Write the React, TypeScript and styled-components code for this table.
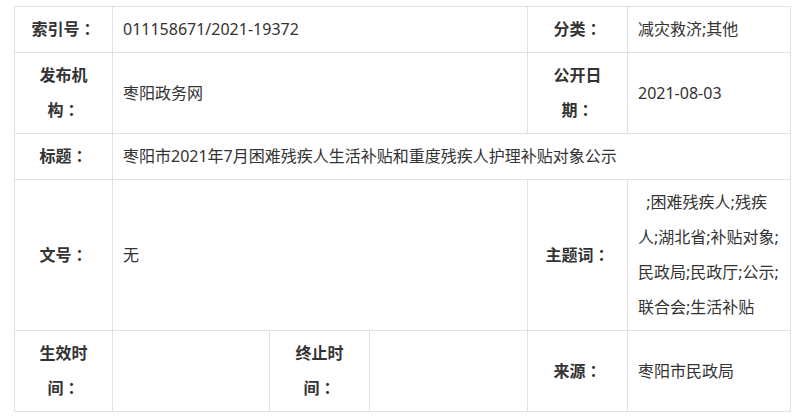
import React from 'react';
import styled, {createGlobalStyle} from 'styled-components';

const GlobalStyle = createGlobalStyle`
    body {
        margin: 0;
        background: #fff;
    }
`;

const Wrapper = styled.div`
    padding: 6px 0 0 14px;
`;

const Table = styled.table`
    width: 777px;
    table-layout: fixed;
    border-collapse: collapse;
    font-family: "Noto Sans", "Noto Sans CJK SC", sans-serif;
    font-size: 16px;
    line-height: 35px;
    color: #333;
`;

const Label = styled.th`
    border: 1px solid #e1e1e1;
    padding: 5px 11px;
    font-weight: bold;
    text-align: center;
    vertical-align: middle;
`;

// full-width colon centred in its box, as in the original page
const Colon = styled.span`
    font-family: "Noto Sans CJK TC", sans-serif;
    line-height: 1;
`;

const Value = styled.td`
    border: 1px solid #e1e1e1;
    padding: 5px 10px;
    text-align: left;
    vertical-align: middle;
    word-break: break-all;
`;

const widths = [98, 157, 100, 158, 100, 163];

const Name = ({text}: {text: string}) => (
    <Label>{text}<Colon>：</Colon></Label>
);

const App = () => {
    return (
        <Wrapper>
            <GlobalStyle />
            <Table>
                <colgroup>
                    {widths.map((w, i) => <col key={i} style={{width: w}} />)}
                </colgroup>
                <tbody>
                    <tr>
                        <Name text="索引号" />
                        <Value colSpan={3}>011158671/2021-19372</Value>
                        <Name text="分类" />
                        <Value>减灾救济;其他</Value>
                    </tr>
                    <tr>
                        <Name text="发布机构" />
                        <Value colSpan={3}>枣阳政务网</Value>
                        <Name text="公开日期" />
                        <Value>2021-08-03</Value>
                    </tr>
                    <tr>
                        <Name text="标题" />
                        <Value colSpan={5}>枣阳市2021年7月困难残疾人生活补贴和重度残疾人护理补贴对象公示</Value>
                    </tr>
                    <tr>
                        <Name text="文号" />
                        <Value colSpan={3}>无</Value>
                        <Name text="主题词" />
                        <Value>&nbsp;&nbsp;;困难残疾人;残疾人;湖北省;补贴对象;民政局;民政厅;公示;联合会;生活补贴</Value>
                    </tr>
                    <tr>
                        <Name text="生效时间" />
                        <Value></Value>
                        <Name text="终止时间" />
                        <Value></Value>
                        <Name text="来源" />
                        <Value>枣阳市民政局</Value>
                    </tr>
                </tbody>
            </Table>
        </Wrapper>
    );
};

export default App;
